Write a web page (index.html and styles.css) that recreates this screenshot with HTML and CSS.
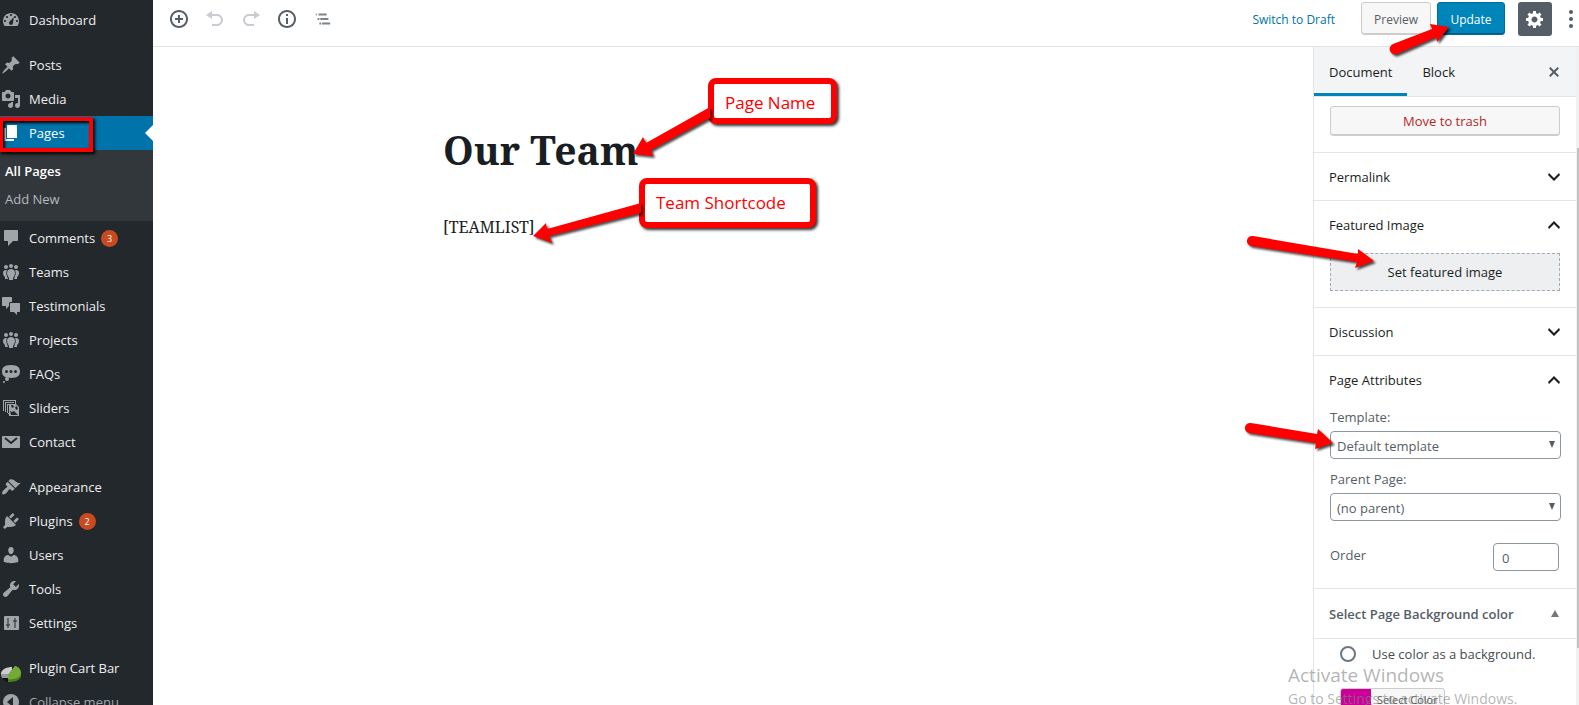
FILE: index.html
```html
<!DOCTYPE html>
<html lang="en">
<head>
    <meta charset="UTF-8">
    <meta name="viewport" content="width=device-width, initial-scale=1.0">
    <title>Edit Page</title>
    <link rel="stylesheet" href="styles.css">
</head>
<body>
    <nav class="admin-menu">
        <a class="menu-item" href="#"><svg viewBox="0 0 20 20"><path fill-rule="evenodd" d="M3.76 16h12.48c1.1-1.37 1.76-3.11 1.76-5 0-4.42-3.58-8-8-8s-8 3.58-8 8c0 1.89.66 3.63 1.76 5zM10 4c.55 0 1 .45 1 1s-.45 1-1 1-1-.45-1-1 .45-1 1-1zM6 6c.55 0 1 .45 1 1s-.45 1-1 1-1-.45-1-1 .45-1 1-1zm8 0c.55 0 1 .45 1 1s-.45 1-1 1-1-.45-1-1 .45-1 1-1zM8.500 11.500L13 7l-1 5.500v.5c0 1.100-.9 2-2 2s-2-.9-2-2c0-.57.1-1.080.5-1.500zM4 10c.55 0 1 .45 1 1s-.45 1-1 1-1-.45-1-1 .45-1 1-1zm12 0c.55 0 1 .45 1 1s-.45 1-1 1-1-.45-1-1 .45-1 1-1z"/></svg>Dashboard</a>

        <div class="menu-separator"></div>

        <a class="menu-item" href="#"><svg viewBox="0 0 20 20"><path d="M10.44 3.02l1.82-1.82 6.36 6.35-1.83 1.82c-1.05-.68-2.48-.57-3.41.36l-.75.75c-.92.93-1.04 2.35-.35 3.41l-1.83 1.82-2.41-2.41-2.8 2.79c-.42.42-3.38 2.71-3.8 2.29s1.86-3.39 2.28-3.81l2.79-2.79L4.1 9.36l1.83-1.82c1.05.69 2.48.57 3.4-.36l.75-.75c.93-.92 1.05-2.35.36-3.41z"/></svg>Posts</a>
        <a class="menu-item" href="#"><svg viewBox="0 0 20 20"><path fill-rule="evenodd" d="M13 11V4c0-.55-.45-1-1-1h-1.67L9 1H5L3.67 3H2c-.55 0-1 .45-1 1v7c0 .55.45 1 1 1h10c.55 0 1-.45 1-1zM7 4.5c1.38 0 2.5 1.12 2.5 2.5S8.38 9.5 7 9.5 4.5 8.38 4.5 7 5.62 4.5 7 4.5zM14 6h5v10.5c0 1.38-1.12 2.5-2.5 2.5S14 17.88 14 16.5s1.12-2.5 2.5-2.5c.17 0 .34.02.5.05V9h-3V6zm-4 8.05V13h2v3.5c0 1.38-1.12 2.5-2.5 2.5S7 17.88 7 16.5 8.12 14 9.5 14c.17 0 .34.02.5.05z"/></svg>Media</a>
        <a class="menu-item current" href="#"><svg viewBox="0 0 20 20"><path d="M6 15V2h10v13H6zm-1 1h8v2H3V5h2v11z"/></svg>Pages<span class="highlight"></span></a>
        <div class="submenu">
            <a class="active" href="#">All Pages</a>
            <a href="#">Add New</a>
        </div>
        <a class="menu-item" href="#"><svg viewBox="0 0 20 20"><path d="M4 2h12c.6 0 1 .4 1 1v9c0 .6-.4 1-1 1h-4l-5 5v-5H4c-.6 0-1-.4-1-1V3c0-.6.4-1 1-1z"/></svg>Comments<span class="count">3</span></a>
        <a class="menu-item" href="#"><svg viewBox="0 0 20 20"><use href="#icon-groups"/></svg>Teams</a>
        <a class="menu-item" href="#"><svg viewBox="0 0 20 20"><path d="M2 1h8c.6 0 1 .4 1 1v4H9.500C8.600 6 8 6.700 8 7.500V10l-3 3v-3H2c-.6 0-1-.4-1-1V2c0-.6.4-1 1-1zM10 7h8c.6 0 1 .4 1 1v7c0 .6-.4 1-1 1h-2v3l-3-3h-3c-.6 0-1-.4-1-1V8c0-.6.4-1 1-1z"/></svg>Testimonials</a>
        <a class="menu-item" href="#"><svg viewBox="0 0 20 20"><use href="#icon-groups"/></svg>Projects</a>
        <a class="menu-item" href="#"><svg viewBox="0 0 20 20"><path fill-rule="evenodd" d="M10 1c7 0 9 2.900 9 6.500S17 14 10 14s-9-2.900-9-6.500S3 1 10 1zM5.500 9a1.500 1.500 0 1 0 0-3 1.500 1.500 0 0 0 0 3zM10 9a1.500 1.500 0 1 0 0-3 1.500 1.500 0 0 0 0 3zm4.500 0a1.500 1.500 0 1 0 0-3 1.500 1.500 0 0 0 0 3z"/><circle cx="6" cy="15" r="2"/><circle cx="3" cy="18" r="1"/></svg>FAQs</a>
        <a class="menu-item" href="#"><svg viewBox="0 0 20 20"><path d="M2 2h13v4h-1V3H3v10H2zM4 4h9v1H5v9H4zM6 6h9l3 3v9H8v-2H7v-1H6z"/><path class="cut" d="M7 7h1v8H7zM10 7h2l1 2-2 1zM14 9l2-1 1 3-2 1zM9 13l2 1 2-1 4 4h-7z"/></svg>Sliders</a>
        <a class="menu-item" href="#"><svg viewBox="0 0 20 20"><path d="M2 4h16c.6 0 1 .4 1 1v10c0 .6-.4 1-1 1H2c-.6 0-1-.4-1-1V5c0-.6.4-1 1-1z"/><path class="cut-line" d="M4 6l6 5 6-5"/></svg>Contact</a>

        <div class="menu-separator"></div>

        <a class="menu-item" href="#"><svg viewBox="0 0 20 20"><path d="M14.480 11.060L7.410 3.990l1.500-1.500c.5-.56 2.300-.47 3.510.32 1.210.8 1.430 1.280 2.910 2.100 1.180.64 2.450 1.260 4.450.85zm-.71.71L6.700 4.700 4.930 6.470c-.39.39-.39 1.020 0 1.410l1.060 1.060c.39.39.39 1.030 0 1.420-.6.6-1.430 1.110-2.210 1.690-.35.26-.7.53-1.010.84C1.430 14.230.4 16.080 1.400 17.070c.99 1 2.840-.03 4.180-1.360.31-.31.58-.66.85-1.020.57-.78 1.080-1.610 1.690-2.210.39-.39 1.020-.39 1.410 0l1.060 1.060c.39.39 1.020.39 1.410 0z"/></svg>Appearance</a>
        <a class="menu-item" href="#"><svg viewBox="0 0 20 20"><path d="M13.110 4.360L9.870 7.600 8 5.730l3.240-3.240c.35-.34 1.050-.2 1.560.32.52.51.66 1.210.31 1.550zm-8 1.770l.91-1.120 9.010 9.010-1.190.84c-.71.71-2.630 1.160-3.820 1.160H6.140L4.900 17.260c-.59.59-1.540.59-2.120 0-.59-.58-.59-1.530 0-2.120l1.240-1.240v-3.880c0-1.130.4-3.190 1.090-3.890zm7.260 3.970l3.240-3.240c.34-.35 1.040-.21 1.550.31.52.51.66 1.210.31 1.550l-3.240 3.250z"/></svg>Plugins<span class="count">2</span></a>
        <a class="menu-item" href="#"><svg viewBox="0 0 20 20"><path d="M10 9.250c-2.270 0-2.730-3.440-2.730-3.440C7 4.020 7.820 2 9.970 2c2.160 0 2.980 2.020 2.710 3.810 0 0-.41 3.440-2.680 3.440zm0 2.570L12.720 10c2.390 0 4.520 2.330 4.520 4.530v2.490s-3.650 1.130-7.240 1.130c-3.650 0-7.240-1.130-7.240-1.130v-2.490c0-2.250 1.940-4.480 4.470-4.480z"/></svg>Users</a>
        <a class="menu-item" href="#"><svg viewBox="0 0 20 20"><path d="M16.680 9.770c-1.340 1.340-3.300 1.670-4.950.99l-5.410 6.520c-.99.99-2.590.99-3.580 0s-.99-2.590 0-3.570l6.520-5.420c-.68-1.650-.35-3.610.99-4.950 1.280-1.280 3.120-1.620 4.720-1.060l-2.890 2.890 2.820 2.820 2.860-2.870c.53 1.580.18 3.390-1.080 4.650z"/></svg>Tools</a>
        <a class="menu-item" href="#"><svg viewBox="0 0 20 20"><rect x="3" y="3" width="15" height="14" rx="1"/><path class="cut-line thin" d="M7 5v10M5 12h4M14 5v10M12 8h4"/></svg>Settings</a>

        <div class="menu-separator"></div>

        <a class="menu-item" href="#"><svg class="cart-icon" viewBox="0 0 20 20"><path d="M0 11c1-4 6-6 11-6v8l-9 3c-1-1-2-3-2-5z" fill="#ccc"/><path d="M1 13l6-1v8c-4-1-6-4-6-7z" fill="#111"/><path d="M0 12l7 0v4l-6 0z" fill="#999"/><path d="M7 13l7-9c4 1 6 4 6 8v3c-2 4-7 5-13 5z" fill="#4d7f1e"/><path d="M7 13l7-9c4 1 6 4 6 7 0 4-6 7-13 6z" fill="#71ab35"/></svg>Plugin Cart Bar</a>
        <a class="menu-item collapse" href="#"><svg viewBox="0 0 20 20"><circle cx="10" cy="10" r="8"/><path class="cut" d="M12 5v10l-6-5z"/></svg>Collapse menu</a>
    </nav>

    <div class="editor">
        <header class="toolbar">
            <button class="tool" aria-label="Add block"><svg viewBox="0 0 20 20"><path fill-rule="evenodd" d="M10 1c-5 0-9 4-9 9s4 9 9 9 9-4 9-9-4-9-9-9zm0 16c-3.900 0-7-3.100-7-7s3.100-7 7-7 7 3.100 7 7-3.100 7-7 7zm1-11H9v3H6v2h3v3h2v-3h3V9h-3V6z"/></svg></button>
            <button class="tool" aria-label="Undo" disabled><svg viewBox="0 0 20 20"><path d="M12 5H7V2L1 6l6 4V7h5c2.200 0 4 1.800 4 4s-1.800 4-4 4H7v2h5c3.300 0 6-2.700 6-6s-2.700-6-6-6z"/></svg></button>
            <button class="tool" aria-label="Redo" disabled><svg viewBox="0 0 20 20"><path d="M8 5h5V2l6 4-6 4V7H8c-2.200 0-4 1.800-4 4s1.800 4 4 4h5v2H8c-3.300 0-6-2.700-6-6s2.700-6 6-6z"/></svg></button>
            <button class="tool" aria-label="Content structure"><svg viewBox="0 0 20 20"><path fill-rule="evenodd" d="M10 1c-5 0-9 4-9 9s4 9 9 9 9-4 9-9-4-9-9-9zm0 16c-3.900 0-7-3.100-7-7s3.100-7 7-7 7 3.100 7 7-3.100 7-7 7zM9 5h2v2H9zm0 4h2v6H9z"/></svg></button>
            <button class="tool" aria-label="Block navigation"><svg class="outline-icon" viewBox="0 0 20 20"><path d="M2 4h1v2H2zM5 4h9v2H5zM4 9h2v2H4zM7 9h9v2H7zM6 14h2v2H6zM9 14h9v2H9z"/></svg></button>

            <div class="publish">
                <button class="link-button">Switch to Draft</button>
                <button class="button preview">Preview</button>
                <button class="button primary">Update</button>
                <button class="gear" aria-label="Settings"><svg viewBox="0 0 20 20"><path fill-rule="evenodd" d="M18 12h-2.180c-.17.7-.44 1.350-.81 1.930l1.540 1.540-2.100 2.100-1.540-1.540c-.58.36-1.230.63-1.910.79V19H8v-2.180c-.68-.16-1.330-.43-1.910-.79l-1.540 1.540-2.120-2.120 1.540-1.540c-.36-.58-.63-1.230-.79-1.910H1V9.030h2.170c.16-.7.44-1.350.8-1.940L2.430 5.550l2.100-2.100 1.540 1.540c.58-.37 1.240-.64 1.930-.81V2h3v2.180c.68.16 1.330.43 1.910.79l1.540-1.540 2.120 2.120-1.540 1.540c.36.59.64 1.240.8 1.940H18V12zm-8.500 1.500c1.660 0 3-1.340 3-3s-1.340-3-3-3-3 1.340-3 3 1.340 3 3 3z"/></svg></button>
                <button class="more" aria-label="More options"><svg viewBox="0 0 6 20"><circle cx="3" cy="3" r="2"/><circle cx="3" cy="10" r="2"/><circle cx="3" cy="17" r="2"/></svg></button>
            </div>
        </header>

        <div class="workspace">
            <main class="content">
                <h1>Our Team</h1>
                <p>[TEAMLIST]</p>
            </main>

            <aside class="settings">
                <div class="tabs">
                    <button class="tab selected">Document</button>
                    <button class="tab">Block</button>
                    <button class="close" aria-label="Close settings"><svg viewBox="0 0 20 20"><path d="M14.950 6.460L11.410 10l3.540 3.540-1.410 1.410L10 11.420l-3.530 3.530-1.420-1.420L8.580 10 5.050 6.470l1.420-1.420L10 8.580l3.540-3.530z"/></svg></button>
                </div>

                <section class="panel trash-panel">
                    <button class="button trash">Move to trash</button>
                </section>
                <section class="panel">
                    <button class="panel-title">Permalink<svg viewBox="0 0 20 20"><use href="#icon-down"/></svg></button>
                </section>
                <section class="panel">
                    <button class="panel-title">Featured Image<svg viewBox="0 0 20 20"><use href="#icon-up"/></svg></button>
                    <div class="panel-body">
                        <button class="set-image">Set featured image</button>
                    </div>
                </section>
                <section class="panel">
                    <button class="panel-title">Discussion<svg viewBox="0 0 20 20"><use href="#icon-down"/></svg></button>
                </section>
                <section class="panel">
                    <button class="panel-title">Page Attributes<svg viewBox="0 0 20 20"><use href="#icon-up"/></svg></button>
                    <div class="panel-body attributes">
                        <label for="template">Template:</label>
                        <div class="select-wrap">
                            <select id="template"><option>Default template</option></select>
                        </div>
                        <label for="parent">Parent Page:</label>
                        <div class="select-wrap">
                            <select id="parent"><option>(no parent)</option></select>
                        </div>
                        <div class="order-row">
                            <label for="order">Order</label>
                            <input type="text" id="order" value="0">
                        </div>
                    </div>
                </section>
                <section class="metabox">
                    <h2>Select Page Background color<span class="toggle"></span></h2>
                    <div class="metabox-body">
                        <div class="radio-row">
                            <input type="radio" id="use-color" name="background">
                            <label for="use-color">Use color as a background.</label>
                        </div>
                        <button class="color-button"><span class="swatch"></span><span class="color-label">Select Color</span></button>
                    </div>
                </section>
                <div class="scroll-thumb"></div>
            </aside>
        </div>

        <!-- Callouts over the editor -->
        <div class="callout callout-name">Page Name</div>
        <div class="callout callout-code">Team Shortcode</div>
        <svg class="arrow arrow-name" viewBox="625 100 90 70"><path d="M710 107L646 143L643 137L633 154L653 156L651 150L710 118z"/></svg>
        <svg class="arrow arrow-code" viewBox="525 195 120 60"><path d="M641 203L547 229L546 223L533 236L552 243L549 236L641 213z"/></svg>
        <svg class="arrow arrow-update" viewBox="1380 15 80 50"><path d="M1393 44L1432 29L1430 24L1449 27L1437 42L1436 37L1397 54A5 5 0 0 1 1393 44z"/></svg>
        <svg class="arrow arrow-image" viewBox="1240 230 145 50"><path d="M1253 236L1358 254V249L1374 261L1355 268L1357 262L1251 246A5 5 0 0 1 1253 236z"/></svg>
        <svg class="arrow arrow-template" viewBox="1240 415 105 45"><path d="M1251 423L1317 434L1318 429L1333 443L1315 449L1316 443L1249 433A5 5 0 0 1 1251 423z"/></svg>

        <div class="watermark">
            <p class="watermark-title">Activate Windows</p>
            <p>Go to Settings to activate Windows.</p>
        </div>
    </div>

    <!-- Shared icons -->
    <svg class="sprite">
        <symbol id="icon-groups" viewBox="0 0 20 20"><circle cx="10" cy="4" r="2"/><circle cx="5" cy="5" r="2"/><circle cx="15" cy="5" r="2"/><path d="M10 7c2 0 4 1 4 4 0 2-1 3-2 5v2H8v-2c-1-2-2-3-2-5 0-3 2-4 4-4zM5 8l1 .5C5 10 5 12 6 14l1 3H4v-2c-1-1-2-2-2-4 0-2 1-3 3-3zM15 8l-1 .5c1 1.500 1 3.500 0 5.500l-1 3h3v-2c1-1 2-2 2-4 0-2-1-3-3-3z"/></symbol>
        <symbol id="icon-down" viewBox="0 0 20 20"><path d="M5 6l5 5 5-5 1 2-6 6-6-6z"/></symbol>
        <symbol id="icon-up" viewBox="0 0 20 20"><path d="M15 14l-5-5-5 5-1-2 6-6 6 6z"/></symbol>
    </svg>
</body>
</html>
```
FILE: styles.css
```css
* {
    box-sizing: border-box;
}
body {
    margin: 0;
    display: flex;
    height: 100vh;
    overflow: hidden;
    background: #fff;
    color: #191e23;
    font-family: "Segoe UI", "Open Sans", "Noto Sans", sans-serif;
    font-size: 13px;
    line-height: 18px;
}
button, input, select {
    font: inherit;
    color: inherit;
    margin: 0;
}
button {
    padding: 0;
    border: 0;
    background: none;
}
svg {
    width: 20px;
    height: 20px;
    fill: currentColor;
    flex: none;
}
.sprite {
    display: none;
}

/* Admin menu */
.admin-menu {
    width: 153px;
    flex: none;
    padding-top: 3px;
    background: #23282d;
    overflow: hidden;
}
.menu-item {
    position: relative;
    display: flex;
    align-items: center;
    gap: 8px;
    height: 34px;
    padding-left: 1px;
    color: #eee;
    text-decoration: none;
}
.menu-item svg {
    color: #a0a5aa;
}
.menu-item .cut {
    fill: #23282d;
}
.menu-item .cut-line {
    fill: none;
    stroke: #23282d;
    stroke-width: 2;
}
.menu-item .thin {
    stroke-width: 1;
}
.menu-item .cart-icon {
    margin-top: 8px;
}
.menu-separator {
    height: 11px;
}
.menu-item.current {
    background: #0073aa;
    color: #fff;
}
.menu-item.current svg {
    color: #fff;
}
.menu-item.current::after {
    content: "";
    position: absolute;
    right: 0;
    top: 9px;
    border: 8px solid transparent;
    border-right-color: #fff;
    border-left: 0;
}
.highlight {
    position: absolute;
    left: -1px;
    top: 1px;
    width: 94px;
    height: 35px;
    border: 4px solid #f00;
    box-shadow: 2px 2px 3px #000, inset 2px 2px 3px #000;
    z-index: 1;
}
.collapse {
    color: #a0a5aa;
}
.count {
    width: 17px;
    height: 17px;
    margin-left: -2px;
    border-radius: 50%;
    background: #ca4a1f;
    color: #fff;
    font-size: 9px;
    line-height: 17px;
    text-align: center;
}
.submenu {
    display: flex;
    flex-direction: column;
    gap: 10px;
    height: 71px;
    padding: 12px 5px;
    background: #32373c;
}
.submenu a {
    color: #b4b9be;
    text-decoration: none;
}
.submenu .active {
    color: #fff;
    font-weight: 600;
}

/* Toolbar */
.editor {
    position: relative;
    display: flex;
    flex-direction: column;
    flex: 1;
    min-width: 0;
}
.toolbar {
    display: flex;
    height: 47px;
    flex: none;
    padding: 2px 5px 0 8px;
    border-bottom: 1px solid #e2e4e7;
}
.tool {
    display: flex;
    align-items: center;
    justify-content: center;
    width: 36px;
    height: 34px;
    color: #555d66;
}
.tool:disabled {
    color: #c9ccd0;
}
.outline-icon {
    color: #7d838a;
    width: 18px;
}
.publish {
    display: flex;
    margin-left: auto;
}
.link-button {
    margin-right: 26px;
    height: 34px;
    padding-top: 2px;
    color: #0073aa;
    font-size: 12px;
}
.button {
    height: 33px;
    padding-top: 2px;
    border: 1px solid #ccc;
    border-radius: 3px;
    background: #f7f7f7;
    box-shadow: inset 0 -1px 0 #ccc;
    color: #555d66;
    font-size: 12px;
}
.preview {
    width: 70px;
    margin-right: 6px;
}
.primary {
    width: 68px;
    border-color: #006d9c;
    background: #0085ba;
    box-shadow: inset 0 -1px 0 #005b82;
    color: #fff;
}
.gear {
    display: flex;
    align-items: center;
    justify-content: center;
    width: 34px;
    height: 34px;
    margin: 0 16px 0 13px;
    border-radius: 3px;
    background: #555d66;
    color: #fff;
}
.more {
    height: 34px;
    color: #555d66;
}
.more svg {
    width: 6px;
    display: block;
}

/* Content */
.workspace {
    display: flex;
    flex: 1;
    min-height: 0;
}
.content {
    flex: 1;
    padding: 73px 290px 0;
    font-family: "Noto Serif", "Liberation Serif", serif;
}
.content h1 {
    margin: 0;
    font-size: 39px;
    line-height: 60px;
}
.content p {
    margin: 33px 0 0;
    font-size: 16px;
    line-height: 28px;
}

/* Settings sidebar */
.settings {
    position: relative;
    width: 266px;
    flex: none;
    border-left: 1px solid #e2e4e7;
    border-right: 3px solid #f1f1f1;
}
.scroll-thumb {
    position: absolute;
    right: -3px;
    top: 101px;
    width: 2px;
    height: 500px;
    background: #c1c1c1;
}
.tabs {
    display: flex;
    height: 50px;
    border-bottom: 1px solid #e2e4e7;
    background: #f3f4f5;
}
.tab {
    padding: 3px 15px 0;
    border-bottom: 3px solid transparent;
}
.tab.selected {
    border-bottom-color: #0085ba;
    font-weight: 500;
}
.close {
    display: flex;
    align-items: center;
    margin-left: auto;
    padding-right: 12px;
    color: #555d66;
}
.panel {
    border-bottom: 1px solid #e2e4e7;
}
.trash-panel {
    padding: 9px 16px 16px;
}
.button.trash {
    display: block;
    width: 100%;
    height: 30px;
    padding: 0;
    color: #b52727;
    font-size: 13px;
}
.panel-title {
    display: flex;
    align-items: center;
    justify-content: space-between;
    width: 100%;
    height: 47px;
    padding: 0 12px 0 15px;
    font-weight: 500;
}
.panel-body {
    padding: 5px 16px 16px;
}
.set-image {
    width: 100%;
    height: 38px;
    border: 1px dashed #a2aab2;
    background: #edeff0;
}
.attributes {
    padding: 5px 15px 17px 16px;
    color: #555d66;
}
.attributes label {
    display: block;
    margin-bottom: 5px;
}
.select-wrap {
    position: relative;
    margin-bottom: 11px;
}
.select-wrap::after {
    content: "";
    position: absolute;
    right: 6px;
    top: 10px;
    border: 3px solid transparent;
    border-top: 7px solid #555d66;
    border-bottom: 0;
}
.attributes select {
    display: block;
    width: 100%;
    height: 28px;
    padding: 2px 6px 0;
    border: 1px solid #8d96a0;
    border-radius: 4px;
    background: #fff;
    appearance: none;
}
.order-row {
    display: flex;
    align-items: center;
    justify-content: space-between;
    padding: 11px 2px 0 0;
}
.order-row input {
    width: 66px;
    height: 28px;
    padding: 2px 8px 0;
    border: 1px solid #8d96a0;
    border-radius: 4px;
}
.metabox h2 {
    display: flex;
    align-items: center;
    justify-content: space-between;
    height: 50px;
    margin: 0;
    padding: 0 17px 0 15px;
    border-bottom: 1px solid #e2e4e7;
    color: #555d66;
    font-size: 13px;
    font-weight: 600;
}
.toggle {
    border: 4px solid transparent;
    border-bottom: 7px solid #72777c;
    border-top: 0;
}
.metabox-body {
    padding: 6px 26px;
}
.radio-row {
    display: flex;
    align-items: center;
    gap: 16px;
    color: #444b52;
}
.radio-row input {
    width: 16px;
    height: 16px;
    border: 2px solid #6c7781;
    border-radius: 50%;
    appearance: none;
}
.color-button {
    display: flex;
    height: 24px;
    margin-top: 25px;
    border: 1px solid #ccc;
    border-radius: 3px;
    background: #f7f7f7;
    color: #555;
    font-size: 11px;
    overflow: hidden;
}
.swatch {
    width: 30px;
    height: 24px;
    background: #c09;
}
.color-label {
    padding: 2px 6px;
}

/* Callouts */
.callout {
    position: absolute;
    padding: 10px 11px;
    border: 6px solid #f00;
    border-radius: 8px;
    background: #fff;
    box-shadow: 2px 2px 3px rgba(0, 0, 0, 0.8);
    color: #f00;
    font-size: 17px;
}
.callout-name {
    left: 555px;
    top: 78px;
    width: 129px;
    height: 46px;
}
.callout-code {
    left: 486px;
    top: 178px;
    width: 177px;
    height: 50px;
}
.arrow {
    position: absolute;
    fill: #f00;
    filter: drop-shadow(2px 2px 1px rgba(0, 0, 0, 0.7));
}
.arrow-name {
    left: 472px;
    top: 100px;
    width: 90px;
    height: 70px;
}
.arrow-code {
    left: 372px;
    top: 195px;
    width: 120px;
    height: 60px;
}
.arrow-update {
    right: 119px;
    top: 15px;
    width: 80px;
    height: 50px;
}
.arrow-image {
    right: 194px;
    top: 230px;
    width: 145px;
    height: 50px;
}
.arrow-template {
    right: 234px;
    top: 415px;
    width: 105px;
    height: 45px;
}
.watermark {
    position: absolute;
    right: 0;
    bottom: -4px;
    width: 291px;
    color: rgba(130, 130, 130, 0.6);
    font-size: 14px;
    line-height: 20px;
    white-space: nowrap;
    pointer-events: none;
}
.watermark p {
    margin: 0;
}
.watermark .watermark-title {
    font-size: 19px;
    line-height: 28px;
}
```
